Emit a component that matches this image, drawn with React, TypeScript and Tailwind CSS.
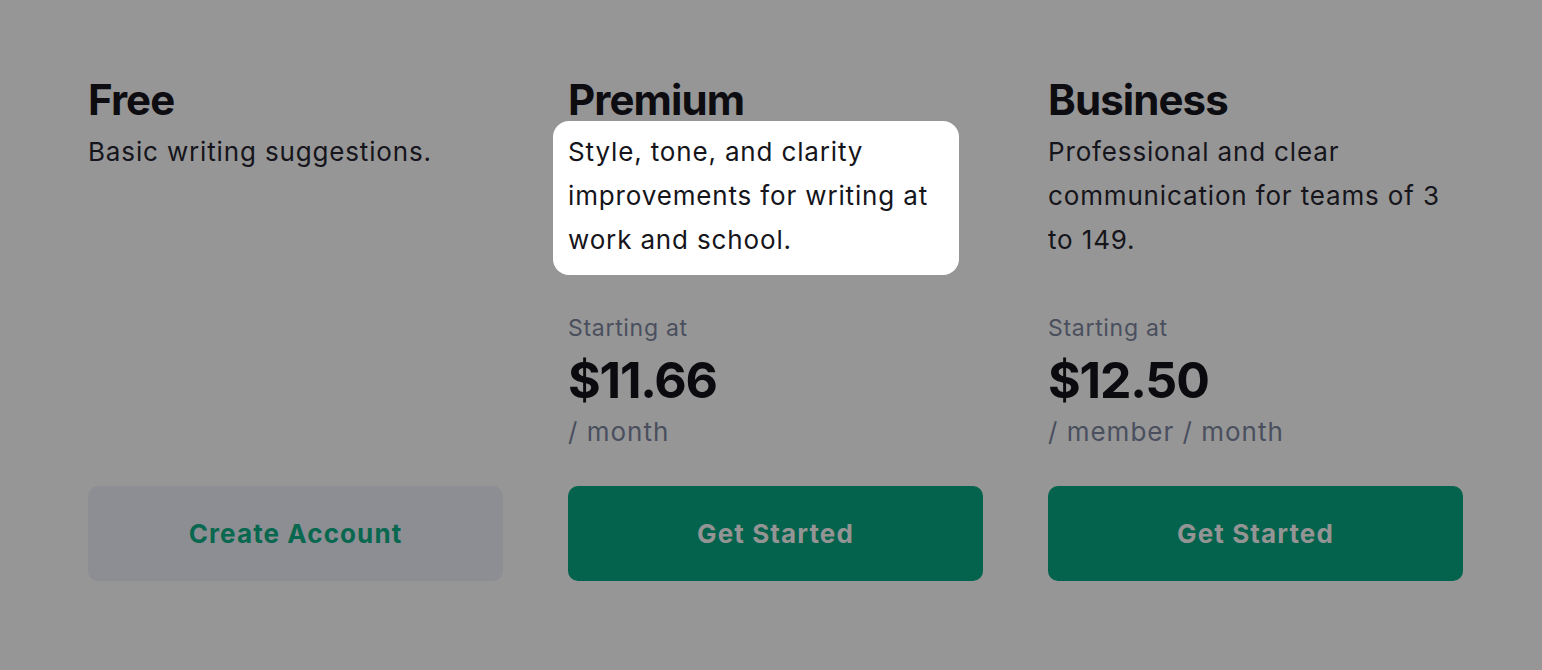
// Pricing tiers shown under a dimmed tour overlay, with the Premium blurb highlighted.

type Plan = {
  name: string;
  desc: string;
  price?: string;
  unit?: string;
  cta: string;
  primary: boolean;
  highlight?: boolean;
};

const PLANS: Plan[] = [
  { name: "Free", desc: "Basic writing suggestions.", cta: "Create Account", primary: false },
  {
    name: "Premium",
    desc: "Style, tone, and clarity improvements for writing at work and school.",
    price: "$11.66",
    unit: "/ month",
    cta: "Get Started",
    primary: true,
    highlight: true,
  },
  {
    name: "Business",
    desc: "Professional and clear communication for teams of 3 to 149.",
    price: "$12.50",
    unit: "/ member / month",
    cta: "Get Started",
    primary: true,
  },
];

function PlanColumn({ plan }: { plan: Plan }) {
  return (
    <div className="flex flex-col w-[415px]">
      <h2 className="text-[42px] leading-[52px] font-bold text-[#0c0c11] tracking-[-0.9px]">{plan.name}</h2>

      {/* Description — the highlighted one sits on a white card */}
      <div className="mt-[4px] min-h-[132px]">
        {plan.highlight ? (
          <div className="-ml-[15px] -mt-[9px] -mb-[13px] w-[406px] rounded-[16px] bg-white pl-[15px] pr-[10px] pt-[9px] pb-[13px]">
            <p className="text-[26px] leading-[44px] text-[#15151b] tracking-[0.85px]">{plan.desc}</p>
          </div>
        ) : (
          <p className="text-[26px] leading-[44px] text-[#15151b] tracking-[0.85px]">{plan.desc}</p>
        )}
      </div>

      {/* Pricing */}
      <div className="mt-[50px] h-[138px] flex flex-col">
        {plan.price && (
          <>
            <span className="text-[23px] leading-[32px] text-[#4a4f5e] tracking-[0.7px]">Starting at</span>
            <span className="mt-[8px] text-[50px] leading-[56px] font-bold text-[#0a0a0f] tracking-[-1.2px]">
              {plan.price}
            </span>
            <span className="mt-[6px] text-[26px] leading-[36px] text-[#4a4f5e] tracking-[1px]">{plan.unit}</span>
          </>
        )}
      </div>

      <button
        className={
          plan.primary
            ? "mt-[36px] h-[95px] w-full rounded-[10px] bg-[#04634d] text-[26px] font-bold tracking-[1.1px] text-[#949494]"
            : "mt-[36px] h-[95px] w-full rounded-[10px] bg-[#8d8e93] text-[26px] font-bold tracking-[1.1px] text-[#07684f]"
        }
      >
        {plan.cta}
      </button>
    </div>
  );
}

export default function App() {
  return (
    <div
      className="min-h-screen w-full bg-[#969696] pl-[88px] pt-[74px]"
      style={{ fontFamily: "Inter, 'Noto Sans', sans-serif" }}
    >
      <div className="grid grid-cols-[415px_415px_415px] gap-x-[65px]">
        {PLANS.map((p) => (
          <PlanColumn key={p.name} plan={p} />
        ))}
      </div>
    </div>
  );
}
